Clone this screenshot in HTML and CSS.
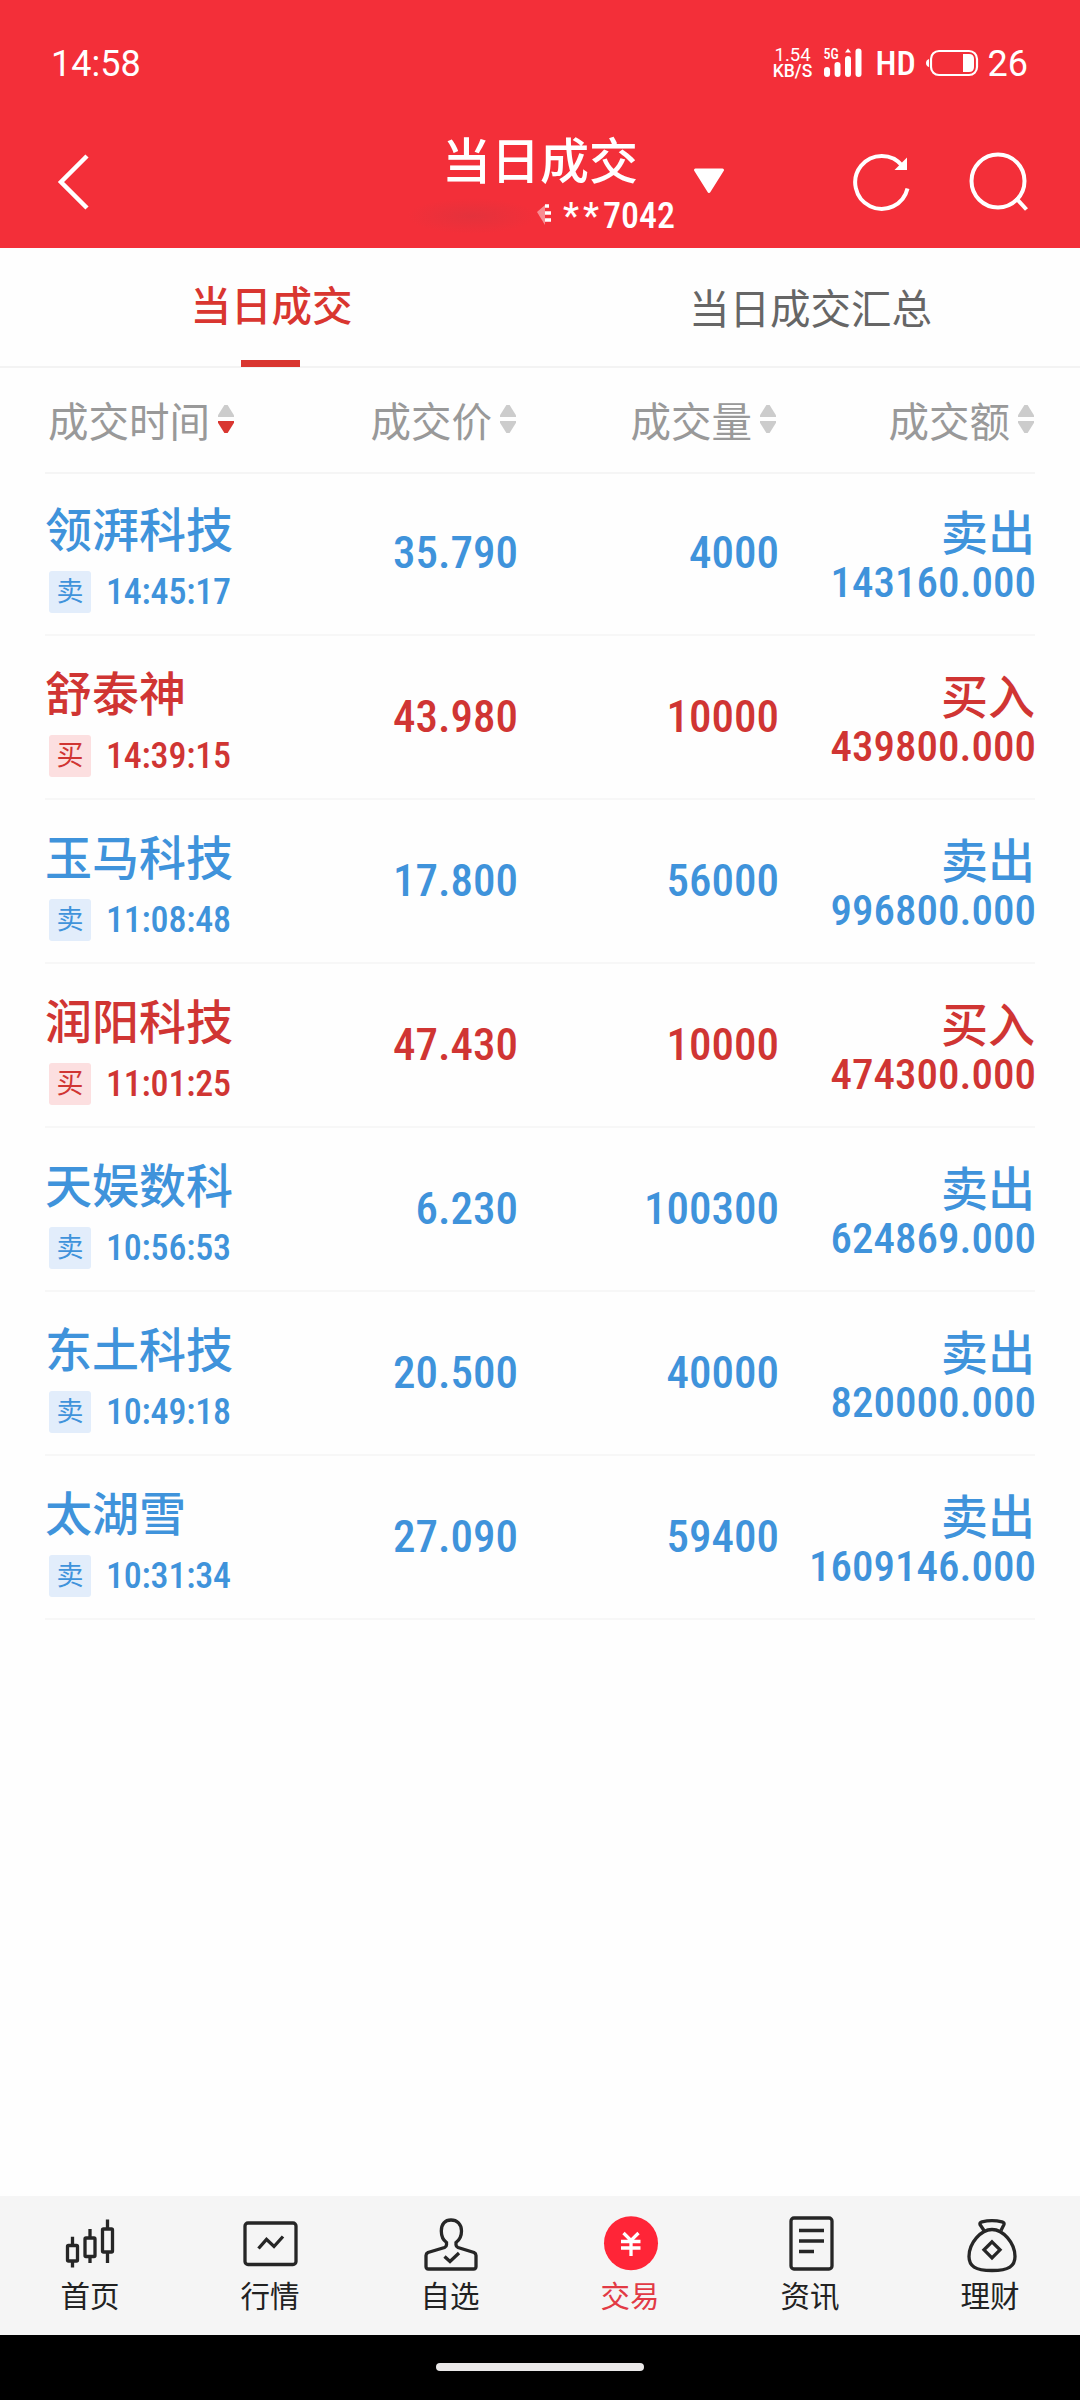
FILE: index.html
```html
<!DOCTYPE html>
<html lang="zh-CN">
<head>
    <meta charset="UTF-8">
    <meta name="viewport" content="width=device-width, initial-scale=1.0">
    <title>当日成交</title>
    <link rel="stylesheet" href="styles.css">
</head>
<body>
    <!-- Header -->
    <header class="header">
        <div class="status-bar">
            <span class="clock">14:58</span>
            <div class="status-icons">
                <div class="net-speed"><span>1.54</span><span class="unit">KB/S</span></div>
                <div class="signal">
                    <span class="signal-type">5G</span>
                    <svg width="38" height="30" viewBox="0 0 38 30" fill="#fff">
                        <rect x="0" y="19" width="6" height="10" rx="3"/>
                        <rect x="10.5" y="14" width="6" height="15" rx="3"/>
                        <rect x="21" y="8" width="6" height="21" rx="3"/>
                        <path d="M24 0.5L27 4.5H21Z"/>
                        <rect x="31.5" y="0.5" width="6" height="28.5" rx="3"/>
                    </svg>
                </div>
                <span class="hd">HD</span>
                <svg class="battery" width="53" height="28" viewBox="0 0 53 28">
                    <path d="M3 10Q0 11 0 14T3 18Z" fill="#fff"/>
                    <rect x="5" y="2" width="46" height="24" rx="8" fill="none" stroke="#fff" stroke-width="2.2"/>
                    <path d="M37 5H43Q48 5 48 10V18Q48 23 43 23H37Z" fill="#fff"/>
                </svg>
                <span class="battery-level">26</span>
            </div>
        </div>
        <div class="title-bar">
            <svg class="back" width="34" height="60" viewBox="0 0 34 60" fill="none" stroke="#fff" stroke-width="4.5">
                <path d="M31 4L5 30L31 56"/>
            </svg>
            <div class="title">
                <h1>当日成交</h1>
                <div class="account">
                    <span class="masked"></span>
                    <svg class="masked-end" width="14" height="28" viewBox="0 0 14 28">
                        <path d="M0 12L8 5V25Z" fill="#fff" opacity="0.45"/>
                        <path d="M8 6H12M8 13H14M8 20H14" stroke="#fff" stroke-width="3.5"/>
                    </svg>
                    <span class="num stars">**</span><span class="num">7042</span>
                </div>
            </div>
            <svg class="dropdown" width="32" height="26" viewBox="0 0 32 26">
                <path d="M2.5 2H29.5L16 23.5Z" fill="#fff" stroke="#fff" stroke-width="3" stroke-linejoin="round"/>
            </svg>
            <svg class="refresh" width="60" height="60" viewBox="0 0 60 60" fill="none" stroke="#fff" stroke-width="4">
                <path d="M55.5 36.5A26.5 26.5 0 1 1 50.5 14"/>
                <path d="M55 5.5V18H42.5Z" fill="#fff" stroke="none"/>
            </svg>
            <svg class="search" width="62" height="60" viewBox="0 0 62 60" fill="none" stroke="#fff" stroke-width="4">
                <circle cx="30" cy="29" r="26.5"/>
                <path d="M48 46L58.5 57.5"/>
            </svg>
        </div>
    </header>

    <!-- Tabs -->
    <nav class="tabs">
        <a class="tab active">当日成交</a>
        <a class="tab">当日成交汇总</a>
    </nav>

    <!-- Trades -->
    <main class="trades">
        <div class="columns">
            <div class="col">成交时间<i class="sort desc"></i></div>
            <div class="col">成交价<i class="sort"></i></div>
            <div class="col">成交量<i class="sort"></i></div>
            <div class="col">成交额<i class="sort"></i></div>
        </div>

        <div class="trade sell">
            <div class="stock"><h2>领湃科技</h2><p><b class="badge">卖</b><span class="num time">14:45:17</span></p></div>
            <div class="num price">35.790</div>
            <div class="num volume">4000</div>
            <div class="total"><h2>卖出</h2><span class="num amount">143160.000</span></div>
        </div>
        <div class="trade buy">
            <div class="stock"><h2>舒泰神</h2><p><b class="badge">买</b><span class="num time">14:39:15</span></p></div>
            <div class="num price">43.980</div>
            <div class="num volume">10000</div>
            <div class="total"><h2>买入</h2><span class="num amount">439800.000</span></div>
        </div>
        <div class="trade sell">
            <div class="stock"><h2>玉马科技</h2><p><b class="badge">卖</b><span class="num time">11:08:48</span></p></div>
            <div class="num price">17.800</div>
            <div class="num volume">56000</div>
            <div class="total"><h2>卖出</h2><span class="num amount">996800.000</span></div>
        </div>
        <div class="trade buy">
            <div class="stock"><h2>润阳科技</h2><p><b class="badge">买</b><span class="num time">11:01:25</span></p></div>
            <div class="num price">47.430</div>
            <div class="num volume">10000</div>
            <div class="total"><h2>买入</h2><span class="num amount">474300.000</span></div>
        </div>
        <div class="trade sell">
            <div class="stock"><h2>天娱数科</h2><p><b class="badge">卖</b><span class="num time">10:56:53</span></p></div>
            <div class="num price">6.230</div>
            <div class="num volume">100300</div>
            <div class="total"><h2>卖出</h2><span class="num amount">624869.000</span></div>
        </div>
        <div class="trade sell">
            <div class="stock"><h2>东土科技</h2><p><b class="badge">卖</b><span class="num time">10:49:18</span></p></div>
            <div class="num price">20.500</div>
            <div class="num volume">40000</div>
            <div class="total"><h2>卖出</h2><span class="num amount">820000.000</span></div>
        </div>
        <div class="trade sell">
            <div class="stock"><h2>太湖雪</h2><p><b class="badge">卖</b><span class="num time">10:31:34</span></p></div>
            <div class="num price">27.090</div>
            <div class="num volume">59400</div>
            <div class="total"><h2>卖出</h2><span class="num amount">1609146.000</span></div>
        </div>
    </main>

    <!-- Bottom navigation -->
    <nav class="bottom-nav">
        <a class="nav-item">
            <svg viewBox="0 0 60 60">
                <rect x="7.5" y="31.5" width="10" height="15.5" rx="1"/>
                <path d="M12.5 22.7V31M12.5 47V53.5"/>
                <rect x="25" y="24" width="10" height="18.5" rx="1"/>
                <path d="M30 15V24M30 42.5V49"/>
                <rect x="42.5" y="15" width="10" height="23" rx="1"/>
                <path d="M47.5 5.5V15M47.5 38V49"/>
            </svg>
            首页
        </a>
        <a class="nav-item">
            <svg viewBox="0 0 60 60">
                <rect x="5" y="9" width="51" height="41.5" rx="3"/>
                <path d="M18.5 34.5L26.5 25.3L34 32.5L43 22.5"/>
            </svg>
            行情
        </a>
        <a class="nav-item">
            <svg viewBox="0 0 60 60">
                <path d="M26.5 31V28.5C23 26 21.3 22 21.3 17C21.3 10 25 6 31 6S41.5 10 41.5 17C41.5 22 39.5 26 36 28.5V31Q36 32.5 38 33.5L54 38.5Q56 39.5 56 41.5V52.5Q56 55 53.5 55H8.5Q6 55 6 52.5V41.5Q6 39.5 8 38.5L24.5 33.5Q26.5 32.5 26.5 31Z"/>
                <path d="M24.5 42.5L30 47.5L39 39"/>
            </svg>
            自选
        </a>
        <a class="nav-item active">
            <svg viewBox="0 0 60 60">
                <circle cx="31" cy="29.2" r="27" fill="#ff2537" stroke="none"/>
                <path d="M23.5 19L31 26.5L38.5 19M21 27.5H40.5M21 34H40.5M31 26.5V42" stroke="#fff"/>
            </svg>
            交易
        </a>
        <a class="nav-item">
            <svg viewBox="0 0 60 60">
                <rect x="11" y="4" width="41" height="51" rx="3"/>
                <path d="M19 16.5H44M19 27H44M19 37.5H34"/>
            </svg>
            资讯
        </a>
        <a class="nav-item">
            <svg viewBox="0 0 60 60">
                <path d="M24 16.5L20 10.5Q19.5 8.5 22 7.8Q32 5.5 42 7.8Q44.5 8.5 44 10.5L41 16.5"/>
                <path d="M32 15.5C43 15.5 55 29 55 42.5C55 52 49 56.5 32 56.5S9 52 9 42.5C9 29 21 15.5 32 15.5Z"/>
                <path d="M32 27.8L40 35.8L32 43.8L24 35.8Z"/>
            </svg>
            理财
        </a>
    </nav>
    <footer class="gesture-bar"><span></span></footer>
</body>
</html>
```

FILE: styles.css
```css
* {
    margin: 0;
    padding: 0;
    box-sizing: border-box;
}

body {
    width: 1080px;
    height: 2400px;
    display: flex;
    flex-direction: column;
    background: #fefefe;
    font-family: Roboto, 'Noto Sans CJK SC', sans-serif;
    overflow: hidden;
}

svg {
    display: block;
    flex: none;
}

/* Header */
.header {
    height: 248px;
    background: #f32f39;
    color: #fff;
}

.status-bar {
    height: 126px;
    padding: 0 52px 0 51px;
    display: flex;
    justify-content: space-between;
    align-items: center;
}

.clock,
.battery-level {
    padding-top: 1px;
    font-size: 36px;
    line-height: 40px;
}

.status-icons {
    display: flex;
    align-items: center;
}

.net-speed {
    width: 42px;
    margin-right: 10px;
    display: flex;
    flex-direction: column;
    align-items: center;
    font-size: 18.5px;
    line-height: 16px;
}

.net-speed .unit {
    font-size: 17.5px;
    font-weight: 500;
}

.signal {
    position: relative;
    margin-right: 14px;
}

.signal-type {
    position: absolute;
    left: 0;
    top: 0;
    font-size: 14px;
    font-weight: 500;
    font-stretch: 85%;
    line-height: 12px;
}

.hd {
    width: 34px;
    margin-right: 16px;
    font-size: 34px;
    font-weight: 500;
    font-stretch: 75%;
    line-height: 40px;
}

.battery {
    margin-right: 9px;
}

.title-bar {
    height: 122px;
    padding: 0 50px 0 56px;
    display: flex;
}

.back {
    margin-top: 26px;
}

.title {
    width: 270px;
    margin-left: 317px;
}

.title h1 {
    padding: 4px 0 0 35px;
    font-size: 49px;
    font-weight: 500;
    line-height: 66px;
}

.account {
    height: 40px;
    display: flex;
    align-items: center;
    font-size: 36px;
}

.masked {
    width: 130px;
    height: 36px;
    background: radial-gradient(ellipse, rgba(215, 52, 62, 0.55), rgba(243, 47, 57, 0) 70%);
}

.masked-end {
    margin: 0 12px 4px 0;
}

.account .stars {
    letter-spacing: 4px;
}

.dropdown {
    margin: 42px 0 0 16px;
}

.refresh {
    margin: 26px 0 0 127px;
}

.search {
    margin: 26px 0 0 56px;
}

/* Tabs */
.tabs {
    height: 120px;
    display: flex;
    border-bottom: 2px solid #f3f3f3;
}

.tab {
    flex: 1;
    position: relative;
    padding-top: 5px;
    text-align: center;
    font-size: 40.5px;
    line-height: 114px;
    color: #666;
}

.tab.active {
    padding: 2px 0 0 2px;
    font-weight: 500;
    color: #d93630;
}

.tab.active::after {
    content: '';
    position: absolute;
    left: 241px;
    bottom: -1px;
    width: 59px;
    height: 7px;
    background: #d93630;
}

/* Trades */
.trades {
    flex: 1;
    padding: 0 45px;
}

.columns,
.trade {
    display: grid;
    grid-template-columns: 212px 260px 260px 258px;
}

.columns {
    height: 106px;
    padding-bottom: 2px;
    border-bottom: 2px solid #f5f5f5;
}

.col {
    display: flex;
    justify-content: flex-end;
    align-items: center;
    padding-right: 1px;
    font-size: 40.5px;
    color: #999;
}

.col:first-child {
    justify-content: flex-start;
    padding-left: 3px;
}

.sort {
    width: 16px;
    height: 28px;
    margin-left: 8px;
    display: flex;
    flex-direction: column;
    justify-content: space-between;
}

.sort::before,
.sort::after {
    content: '';
    height: 12px;
    background: #ccc;
    clip-path: polygon(40% 0, 60% 0, 100% 85%, 100% 100%, 0 100%, 0 85%);
}

.sort::after {
    clip-path: polygon(0 0, 100% 0, 100% 15%, 60% 100%, 40% 100%, 0 15%);
}

.sort.desc::after {
    background: #d93630;
}

.trade {
    height: 164px;
    padding-top: 2px;
    border-bottom: 2px solid #f7f7f7;
}

.columns + .trade {
    height: 162px;
    padding-top: 0;
}

.sell {
    color: #3f93db;
}

.buy {
    color: #d03533;
}

.num {
    font-weight: 500;
    font-stretch: 85%;
}

.trade h2 {
    font-size: 47px;
    font-weight: 500;
    line-height: 60px;
}

.stock {
    padding-top: 27px;
}

.stock p {
    height: 44px;
    margin: 9px 0 0 4px;
    display: flex;
    align-items: center;
}

.badge {
    width: 42px;
    height: 42px;
    margin-right: 15px;
    border-radius: 3px;
    background: #e2edfb;
    font-size: 27px;
    font-weight: 400;
    line-height: 42px;
    text-align: center;
}

.buy .badge {
    background: #fcdfe0;
}

.time {
    font-size: 36px;
    letter-spacing: -0.2px;
}

.price,
.volume {
    padding-bottom: 3px;
    align-self: center;
    text-align: right;
    font-size: 45px;
}

.price {
    margin-right: -1px;
}

.volume {
    margin-right: -2px;
}

.total {
    padding-top: 30px;
    display: flex;
    flex-direction: column;
    align-items: flex-end;
}

.amount {
    margin: -3px -1px 0 0;
    font-size: 43px;
    line-height: 42px;
}

/* Bottom navigation */
.bottom-nav {
    height: 139px;
    display: flex;
    background: #f5f5f5;
}

.nav-item {
    flex: 1;
    padding-top: 18px;
    display: flex;
    flex-direction: column;
    align-items: center;
    font-size: 29.5px;
    line-height: 47px;
    color: #222;
}

.nav-item.active {
    color: #e23a45;
}

.nav-item svg {
    width: 60px;
    height: 60px;
    fill: none;
    stroke: #262626;
    stroke-width: 3.3;
}

.gesture-bar {
    height: 65px;
    display: flex;
    justify-content: center;
    background: #000;
}

.gesture-bar span {
    width: 208px;
    height: 8px;
    margin-top: 28px;
    border-radius: 4px;
    background: #ebe9e9;
}
```
